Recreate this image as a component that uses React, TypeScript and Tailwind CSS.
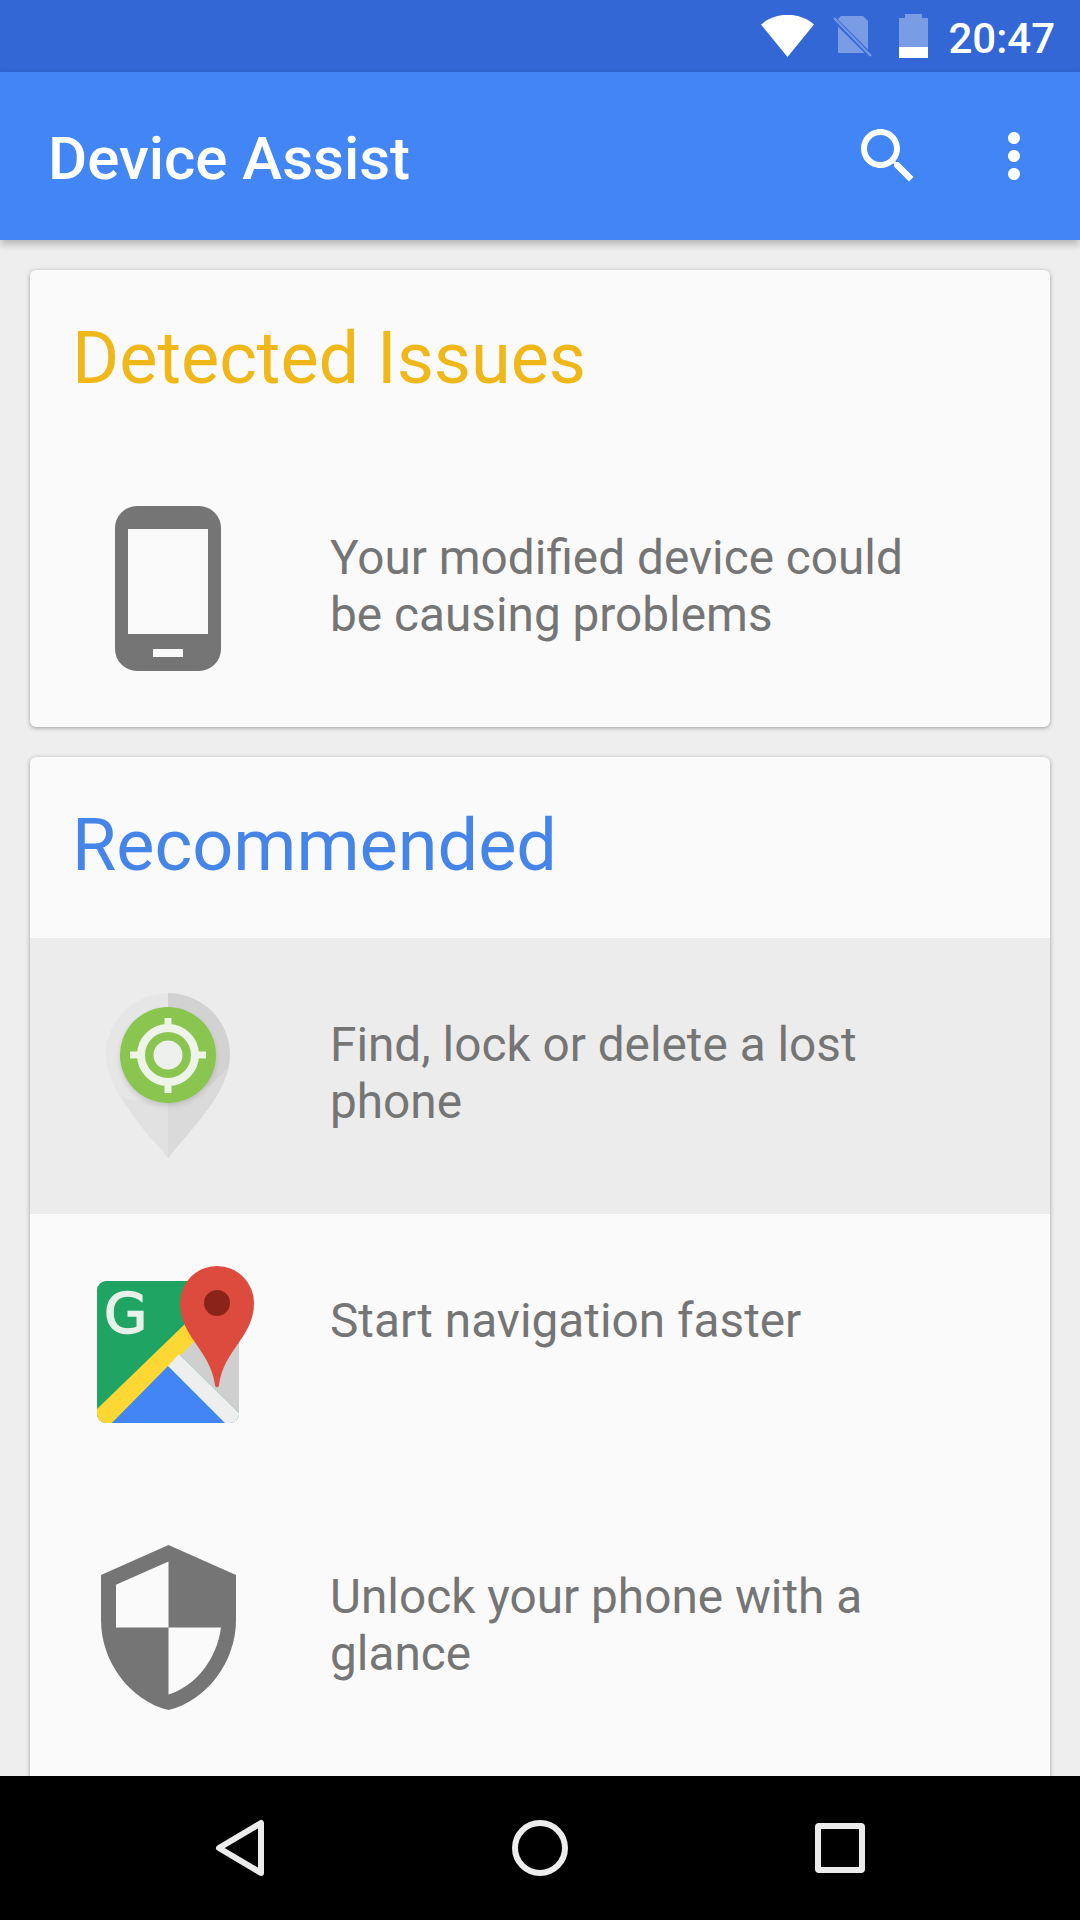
const font = "font-['Roboto',sans-serif]";

function PhoneIcon() {
  return (
    <svg width="106" height="165" viewBox="115 506 106 165">
      <path
        fillRule="evenodd"
        fill="#757575"
        d="M137 506h62a22 22 0 0 1 22 22v121a22 22 0 0 1-22 22h-62a22 22 0 0 1-22-22V528a22 22 0 0 1 22-22zM128 529v105h80V529zM153 649v8h30v-8z"
      />
    </svg>
  );
}

function PinIcon() {
  return (
    <svg width="124" height="165" viewBox="106 993 124 165">
      <defs>
        <filter id="gs" x="-30%" y="-30%" width="160%" height="160%">
          <feGaussianBlur stdDeviation="2.500" />
        </filter>
      </defs>
      <path d="M168 993a62 62 0 0 0-62 62c0 38 42 76 62 103z" fill="#e6e6e6" />
      <path d="M168 993a62 62 0 0 1 62 62c0 38-42 76-62 103z" fill="#d2d2d2" />
      <path d="M168 1100 L210 1085 L228 1068 C222 1100 190 1130 168 1158z" fill="#dadada" />
      <path d="M168 1100 L135 1100 L122 1098 C135 1122 155 1142 168 1158z" fill="#e1e1e1" />
      <circle cx="168" cy="1058" r="48" fill="#000" opacity="0.12" filter="url(#gs)" />
      <circle cx="168" cy="1055" r="48" fill="#8ac550" />
      <circle cx="168" cy="1055" r="27" fill="none" stroke="#eef4e8" strokeWidth="8" />
      <circle cx="168" cy="1055" r="14.500" fill="#eef0ee" />
      <path d="M164.500 1018h7v10h-7zM164.500 1082h7v11h-7zM130 1051.500h10v7h-10zM196 1051.500h10v7h-10z" fill="#eef4e8" />
    </svg>
  );
}

function MapsIcon() {
  return (
    <svg width="172" height="157" viewBox="82 1266 172 157" className="mt-[-3px]">
      <defs>
        <clipPath id="sq">
          <rect x="97" y="1281" width="142" height="142" rx="9" />
        </clipPath>
      </defs>
      <g clipPath="url(#sq)">
        <rect x="97" y="1281" width="142" height="142" fill="#1fa463" />
        <path d="M192 1338H239V1413L180 1355z" fill="#cfcfcf" />
        <path d="M186 1323L196 1340L112 1423H97V1409z" fill="#fdd835" />
        <path d="M168 1366L225 1423H112z" fill="#4285f4" />
        <path d="M179 1354L239 1413V1423H225L168 1366z" fill="#eeeeee" />
      </g>
      <text
        x="104"
        y="1332"
        fontFamily="'DejaVu Sans', sans-serif"
        fontSize="56"
        fill="#e8f0ea"
        stroke="#e8f0ea"
        strokeWidth="1.500"
      >
        G
      </text>
      <path
        d="M217 1266a37 37 0 0 1 37 37c0 34-30 46-35 82-.3 3-3.700 3-4 0-5-36-35-48-35-82a37 37 0 0 1 37-37z"
        fill="#dd4b3e"
      />
      <circle cx="217" cy="1303" r="13" fill="#8a2318" />
    </svg>
  );
}

function ShieldIcon() {
  return (
    <svg width="135" height="165" viewBox="3 1 18 22">
      <path
        fill="#757575"
        d="M12 1L3 5v6c0 5.550 3.840 10.740 9 12 5.160-1.260 9-6.450 9-12V5l-9-4zm0 10.990h7c-.53 4.120-3.280 7.790-7 8.940V12H5V6.300l7-3.110v8.800z"
      />
    </svg>
  );
}

function Row({ icon, lines, bg, h }: { icon: React.ReactNode; lines: string[]; bg?: string; h: string }) {
  return (
    <div className={`flex items-start ${h} ${bg ?? ""}`}>
      <div className="flex w-[276px] justify-center pt-[55px]">{icon}</div>
      <div className="ml-[24px] pt-[79px] text-[47.75px] leading-[57px] text-[#757575]">
        {lines.map((l) => (
          <div key={l}>{l}</div>
        ))}
      </div>
    </div>
  );
}

function Title({ children, color }: { children: React.ReactNode; color: string }) {
  return (
    <div className={`flex h-[181px] items-start px-[42px] pt-[49px] text-[72px] leading-[80px] ${color}`}>{children}</div>
  );
}

export default function App() {
  return (
    <div className={`flex h-[1920px] w-[1080px] flex-col overflow-hidden bg-[#eeeeee] ${font}`}>
      <div className="flex h-[72px] shrink-0 items-center justify-end bg-[#3367d6] pr-[25px]">
        <svg width="53" height="42" viewBox="761 14 53 42" className="mr-[19px]">
          <path d="M761 23.500C776 10.500 799 10.500 814 23.500L787.500 56z" fill="#fff" />
        </svg>
        <svg width="39" height="41" viewBox="833 16 39 41" className="mr-[27px]">
          <path d="M841 16h22l5 5v32h-30V19z" fill="#fff" opacity="0.35" />
          <path d="M835 20L870 55" stroke="#3367d6" strokeWidth="5" />
          <path d="M834 18L871 56" stroke="#fff" opacity="0.3" strokeWidth="2.500" />
        </svg>
        <svg width="29" height="44" viewBox="899 14 29 44" className="mr-[20px]">
          <path d="M905 14h17v4h6v40h-29V18h6z" fill="#fff" opacity="0.35" />
          <path d="M899 47h29v11h-29z" fill="#fff" />
        </svg>
        <span className="mt-[5px] text-[42px] leading-[50px] font-medium text-white">20:47</span>
      </div>

      <div className="relative z-10 flex h-[168px] shrink-0 items-center bg-[#4285f4] pr-[30px] pl-[48px] shadow-[0_4px_8px_rgba(0,0,0,0.25)]">
        <span className="mt-[6px] flex-1 text-[60px] leading-[72px] font-medium text-white">Device Assist</span>
        <svg width="72" height="72" viewBox="0 0 24 24" fill="#fff">
          <path d="M15.500 14h-.79l-.28-.27C15.410 12.590 16 11.110 16 9.500 16 5.910 13.090 3 9.500 3S3 5.910 3 9.500 5.910 16 9.500 16c1.610 0 3.090-.59 4.230-1.570l.27.28v.79l5 4.990L20.490 19l-4.990-5zm-6 0C7.010 14 5 11.990 5 9.500S7.010 5 9.500 5 14 7.010 14 9.500 11.990 14 9.500 14z" />
        </svg>
        <svg width="72" height="72" viewBox="0 0 24 24" fill="#fff" className="ml-[54px]">
          <path d="M12 8c1.100 0 2-.9 2-2s-.9-2-2-2-2 .9-2 2 .9 2 2 2zm0 2c-1.100 0-2 .9-2 2s.9 2 2 2 2-.9 2-2-.9-2-2-2zm0 6c-1.100 0-2 .9-2 2s.9 2 2 2 2-.9 2-2-.9-2-2-2z" />
        </svg>
      </div>

      <div className="flex min-h-0 flex-1 flex-col gap-[30px] overflow-hidden px-[30px] pt-[30px]">
        <div className="shrink-0 rounded-[6px] bg-[#fafafa] shadow-[0_1px_4px_rgba(0,0,0,0.35)]">
          <Title color="text-[#f0b719]">Detected Issues</Title>
          <Row h="h-[276px]" icon={<PhoneIcon />} lines={["Your modified device could", "be causing problems"]} />
        </div>
        <div className="h-[1100px] shrink-0 rounded-[6px] bg-[#fafafa] shadow-[0_1px_4px_rgba(0,0,0,0.35)]">
          <Title color="text-[#4585e8]">Recommended</Title>
          <Row h="h-[276px]" bg="bg-[#ececec]" icon={<PinIcon />} lines={["Find, lock or delete a lost", "phone"]} />
          <Row h="h-[276px]" icon={<MapsIcon />} lines={["Start navigation faster"]} />
          <Row h="h-[276px]" icon={<ShieldIcon />} lines={["Unlock your phone with a", "glance"]} />
        </div>
      </div>

      <div className="relative z-10 flex h-[144px] shrink-0 items-center justify-center gap-[228px] bg-black">
        <svg width="72" height="72" viewBox="0 0 72 72" fill="none" stroke="#ececec" strokeWidth="6" strokeLinejoin="round">
          <path d="M57 11V61L15 36z" />
        </svg>
        <svg width="72" height="72" viewBox="0 0 72 72" fill="none" stroke="#ececec" strokeWidth="6">
          <circle cx="36" cy="36" r="25" />
        </svg>
        <svg width="72" height="72" viewBox="0 0 72 72" fill="none" stroke="#ececec" strokeWidth="6" strokeLinejoin="round">
          <rect x="14" y="14" width="44" height="44" rx="1" />
        </svg>
      </div>
    </div>
  );
}
